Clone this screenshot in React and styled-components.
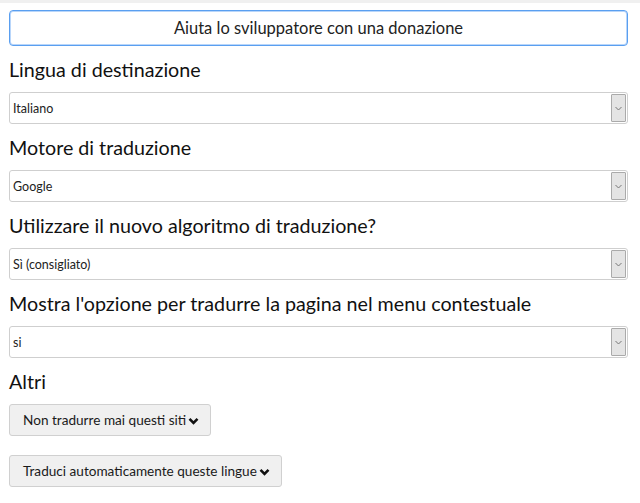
import React from 'react';
import styled, { createGlobalStyle } from 'styled-components';

const GlobalStyle = createGlobalStyle`
  body {
    margin: 0;
    background: #fff;
    font-family: Lato, "Open Sans", sans-serif;
    color: #1a1a1a;
  }
`;

const TopStrip = styled.div`
  height: 3px;
  background: #f0f0f0;
`;

const Page = styled.div`
  padding: 7px 12px 0 9px;
  display: flex;
  flex-direction: column;
`;

const DonateButton = styled.button`
  height: 36px;
  width: 100%;
  background: #fff;
  border: 1px solid #5a9ff0;
  box-shadow: inset 0 0 0 1px #b9d6fa;
  border-radius: 4px;
  font-family: Lato, "Open Sans", sans-serif;
  font-size: 16.5px;
  color: #222;
  cursor: pointer;
`;

const Label = styled.div`
  font-size: 19.7px;
  line-height: 28px;
  margin: 10px 0 8px;
  color: #111;
`;

const SelectBox = styled.div`
  height: 32px;
  box-sizing: border-box;
  border: 1px solid #cfcfcf;
  border-radius: 3px;
  display: flex;
  align-items: stretch;
  background: #fff;
`;

const SelectValue = styled.div`
  flex: 1;
  display: flex;
  align-items: center;
  padding-left: 3px;
  font-size: 12.5px;
  color: #222;
`;

const ArrowBox = styled.div`
  width: 13px;
  margin: 1px 1px 1px 0;
  background: #e4e4e4;
  border: 1px solid #aaa;
  border-radius: 1px;
  display: flex;
  align-items: center;
  justify-content: center;
`;

const Actions = styled.div`
  display: flex;
  flex-direction: column;
  align-items: flex-start;
  gap: 19px;
`;

const MenuButton = styled.button`
  height: 32px;
  box-sizing: border-box;
  padding: 0 11px 0 13px;
  background: #f0f0f0;
  border: 1px solid #d0d0d0;
  border-radius: 3px;
  font-family: Lato, "Open Sans", sans-serif;
  font-size: 13.6px;
  color: #1a1a1a;
  display: flex;
  align-items: center;
  gap: 2px;
  cursor: pointer;
`;

const ChevronIcon = styled.svg`
  margin-top: 2px;
`;

function Select({ value }) {
  return (
    <SelectBox>
      <SelectValue>{value}</SelectValue>
      <ArrowBox>
        <svg width="7" height="5" viewBox="0 0 7 5">
          <polyline points="0.5,1 3.5,4 6.5,1" fill="none" stroke="#777" strokeWidth="1" />
        </svg>
      </ArrowBox>
    </SelectBox>
  );
}

function Chevron() {
  return (
    <ChevronIcon width="11" height="8" viewBox="0 0 11 8">
      <polyline points="1.5,1.8 5.5,5.8 9.5,1.8" fill="none" stroke="#111" strokeWidth="2.6" />
    </ChevronIcon>
  );
}

const settings = [
  { label: 'Lingua di destinazione', value: 'Italiano' },
  { label: 'Motore di traduzione', value: 'Google' },
  { label: 'Utilizzare il nuovo algoritmo di traduzione?', value: 'Sì (consigliato)' },
  { label: "Mostra l'opzione per tradurre la pagina nel menu contestuale", value: 'si' },
];

export default function App() {
  return (
    <>
      <GlobalStyle />
      <TopStrip />
      <Page>
        <DonateButton>Aiuta lo sviluppatore con una donazione</DonateButton>
        {settings.map(s => (
          <React.Fragment key={s.label}>
            <Label>{s.label}</Label>
            <Select value={s.value} />
          </React.Fragment>
        ))}
        <Label>Altri</Label>
        <Actions>
          <MenuButton>Non tradurre mai questi siti<Chevron /></MenuButton>
          <MenuButton>Traduci automaticamente queste lingue<Chevron /></MenuButton>
        </Actions>
      </Page>
    </>
  );
}
